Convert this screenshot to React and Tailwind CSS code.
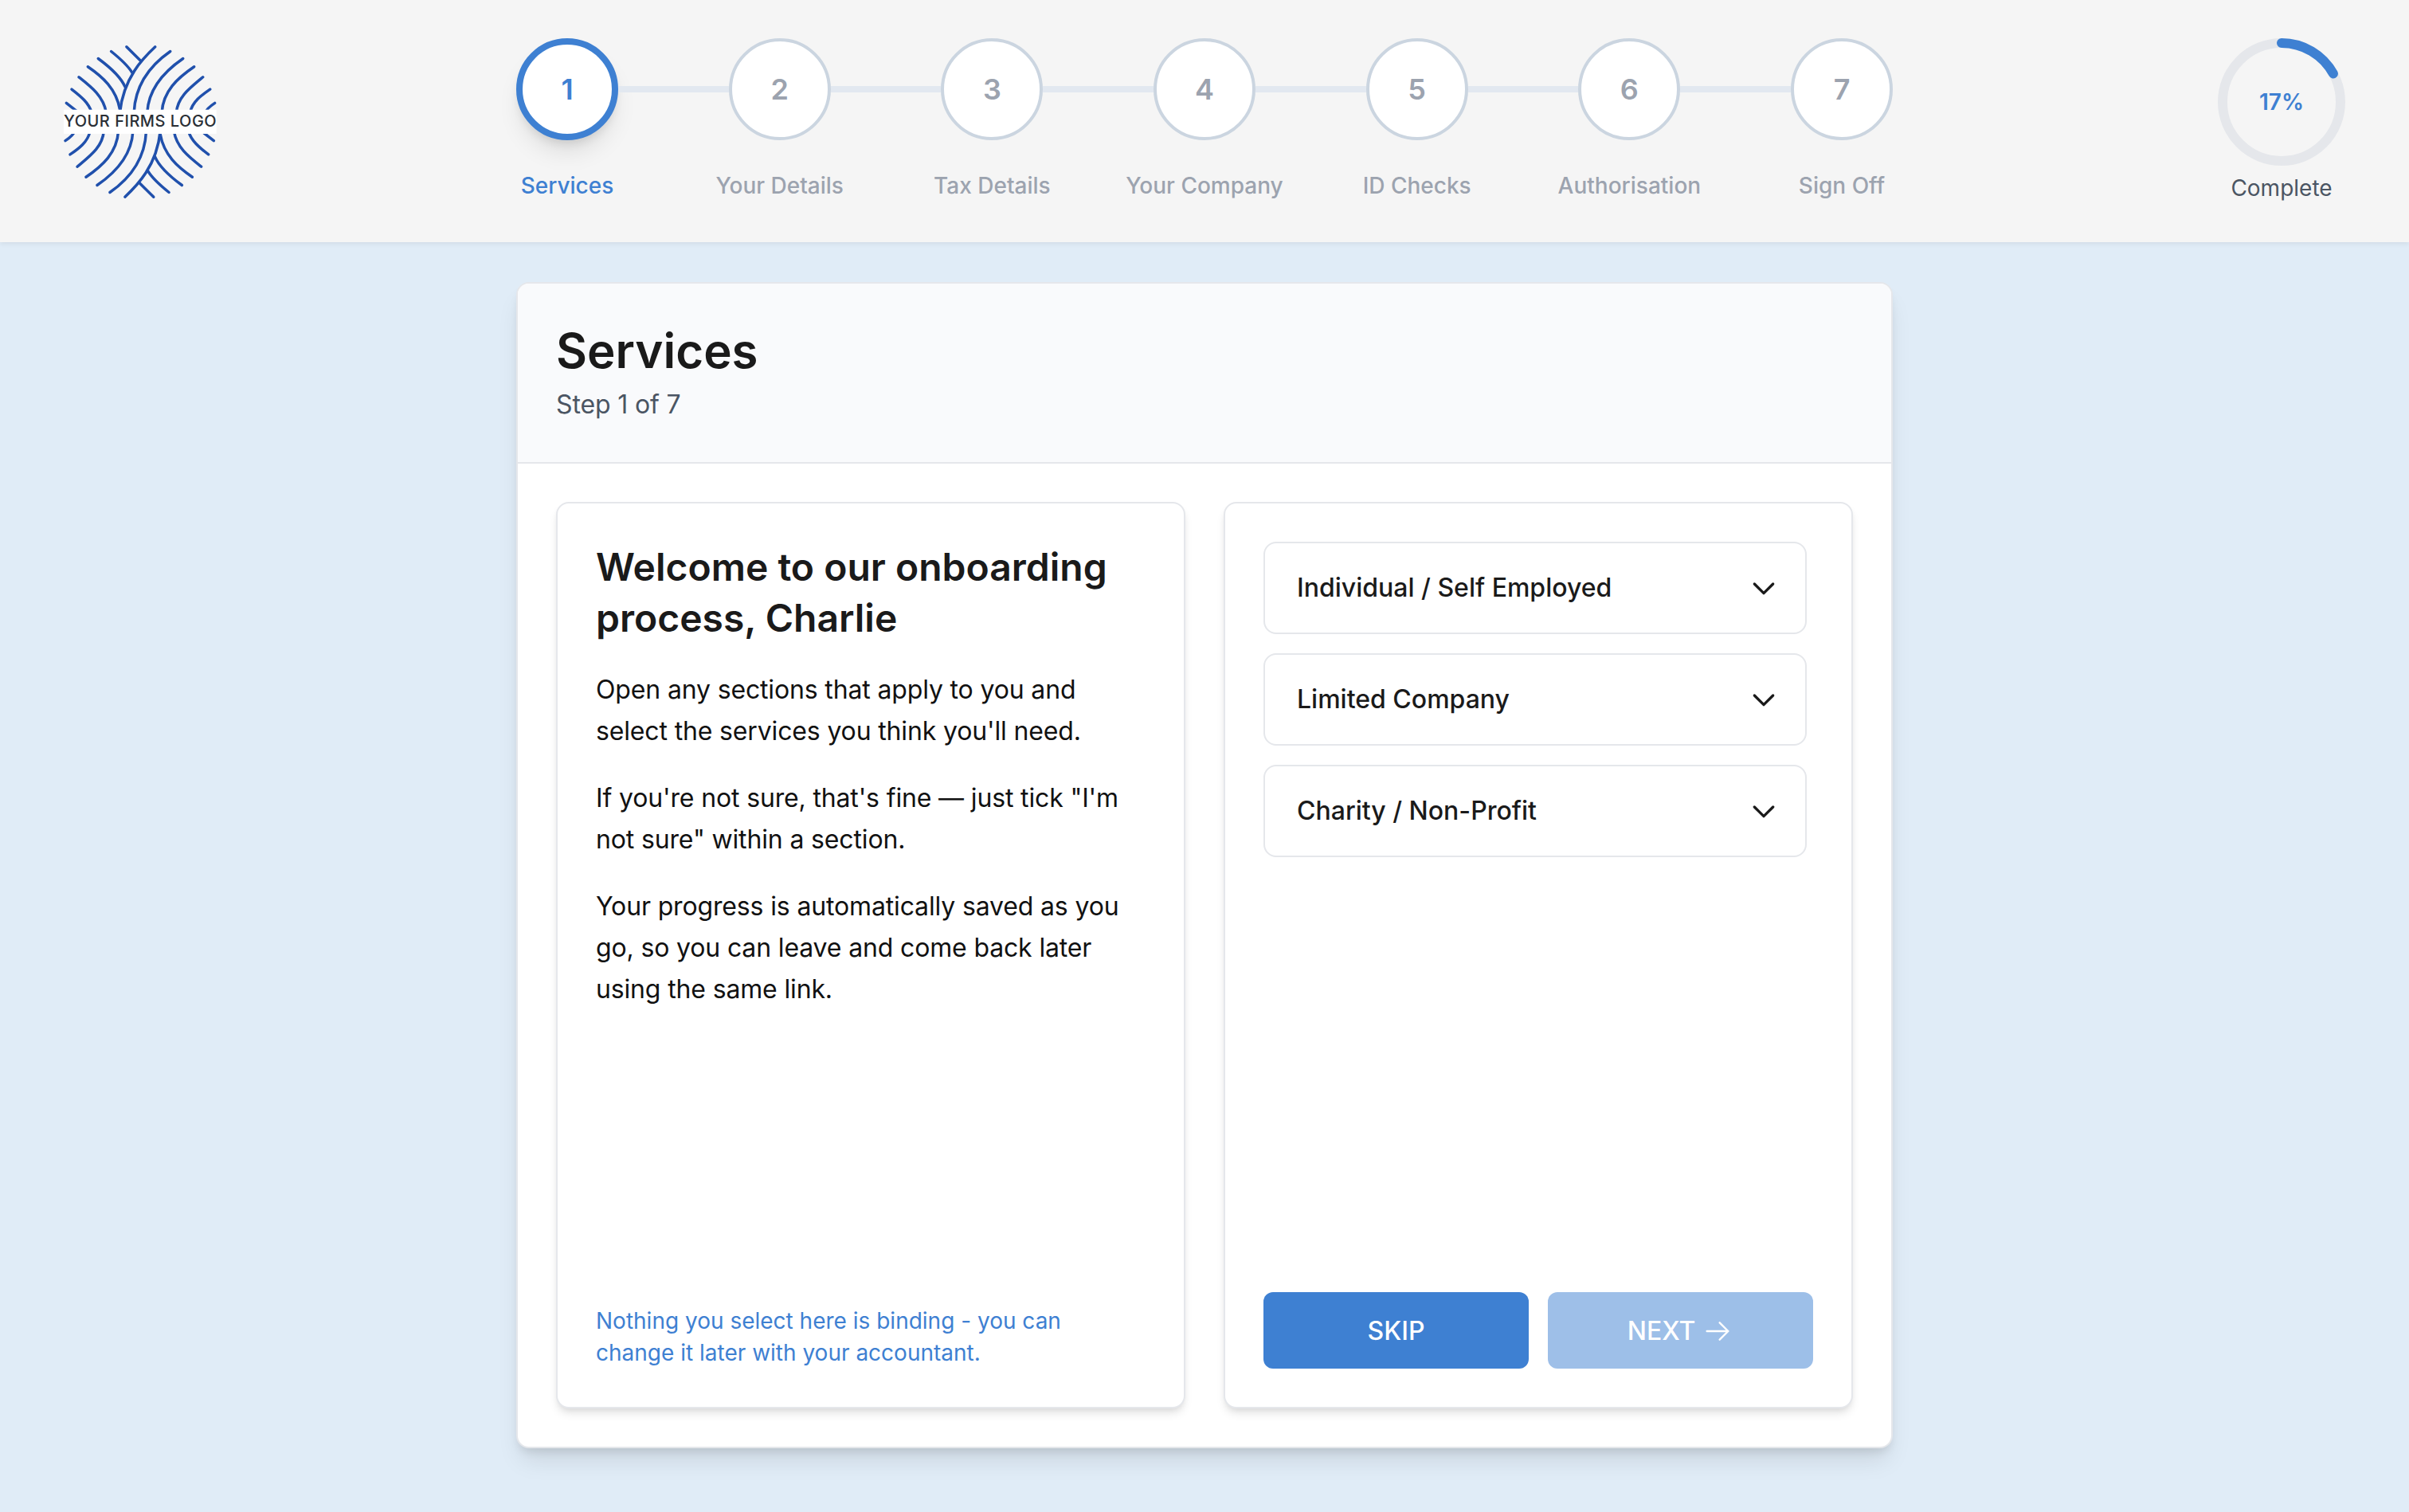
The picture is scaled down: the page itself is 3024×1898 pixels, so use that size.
const steps = ["Services", "Your Details", "Tax Details", "Your Company", "ID Checks", "Authorisation", "Sign Off"];
const sections = ["Individual / Self Employed", "Limited Company", "Charity / Non-Profit"];

function Logo() {
  const lines = [
    "M465 83 C420 125 345 200 332 330",
    "M357 83 L410 135",
    "M299 100 C330 125 360 150 378 180",
    "M250 127 C295 160 335 195 352 235",
    "M211 158 C265 195 318 240 332 320",
    "M177 197 C225 235 270 270 280 330",
    "M150 243 C185 270 215 295 225 330",
    "M130 295 L175 330",
    "M522 100 C450 150 390 220 385 330",
    "M570 127 C500 175 440 240 435 330",
    "M612 158 C550 200 495 250 490 330",
    "M645 197 C600 235 550 270 545 330",
    "M672 243 C640 265 605 290 597 330",
    "M690 295 C675 305 660 315 655 330",
  ];
  return (
    <svg width="193" height="195" viewBox="120 75 580 585" className="mt-2">
      <g fill="none" stroke="#2050ac" strokeWidth="10.5" strokeLinecap="round">
        {lines.map((d) => <path key={d} d={d} />)}
        <g transform="rotate(180 408 366)">
          {lines.map((d) => <path key={d} d={d} />)}
        </g>
      </g>
      <rect x="120" y="320" width="576" height="91" fill="#ffffff" />
      <text x="408" y="385" textAnchor="middle" fontSize="60" fontWeight="500" fill="#2a2f36" textLength="576" lengthAdjust="spacing" fontFamily="Inter, sans-serif">YOUR FIRMS LOGO</text>
    </svg>
  );
}

function Step({ num, label, active }) {
  return (
    <div className="flex w-[128px] shrink-0 flex-col items-center">
      <div
        className={`flex h-[128px] w-[128px] items-center justify-center rounded-full bg-white text-[36px] font-semibold ${
          active
            ? "border-[8px] border-[#3e80d2] text-[#3e80d2] shadow-[0_20px_30px_-6px_rgba(0,0,0,0.1),0_8px_12px_-4px_rgba(0,0,0,0.1)]"
            : "border-[4px] border-[#cbd5e0] text-[#9ca3af]"
        }`}
      >
        {num}
      </div>
      <div className={`mt-[37px] whitespace-nowrap text-[28px] leading-[40px] font-medium ${active ? "text-[#3e80d2]" : "text-[#9ca3af]"}`}>
        {label}
      </div>
    </div>
  );
}

function ProgressRing() {
  return (
    <div className="flex w-[160px] flex-col items-center justify-self-end">
      <div className="relative h-[160px] w-[160px]">
        <svg width="160" height="160" viewBox="0 0 160 160" className="-rotate-90">
          <circle cx="80" cy="80" r="74" fill="none" stroke="#e5e7eb" strokeWidth="12" />
          <circle cx="80" cy="80" r="74" fill="none" stroke="#3e80d2" strokeWidth="12" strokeLinecap="round" strokeDasharray="79 465" />
        </svg>
        <div className="absolute inset-0 flex items-center justify-center text-[28px] font-semibold text-[#3e80d2]">17%</div>
      </div>
      <div className="mt-[8px] whitespace-nowrap text-[28px] leading-[40px] text-[#4b5563]">Complete</div>
    </div>
  );
}

function Section({ title }) {
  return (
    <div className="flex h-[116px] items-center justify-between rounded-[16px] border-2 border-[#e5e7eb] bg-white pl-10 pr-8">
      <span className="text-[32px] font-medium text-[#1a1a1a]">{title}</span>
      <svg width="40" height="40" viewBox="0 0 24 24" fill="none" stroke="#1a1a1a" strokeWidth="2" strokeLinecap="round" strokeLinejoin="round">
        <path d="M19 9l-7 7-7-7" />
      </svg>
    </div>
  );
}

export default function App() {
  return (
    <div className="flex min-h-[1898px] flex-col bg-[#e0ecf7] font-[Inter,sans-serif]">
      {/* Top bar */}
      <header className="grid h-[304px] grid-cols-[1fr_1728px_1fr] items-start bg-[#f5f5f5] px-20 pt-12 shadow-[0_2px_6px_rgba(0,0,0,0.07)]">
        <Logo />
        <div className="flex items-start">
          {steps.map((label, i) => (
            <div key={label} className={`flex items-start ${i < 6 ? "flex-1" : ""}`}>
              <Step num={i + 1} label={label} active={i === 0} />
              {i < 6 && <div className="mt-[60px] h-2 flex-1 bg-[#e2e8f0]"></div>}
            </div>
          ))}
        </div>
        <ProgressRing />
      </header>

      {/* Main card */}
      <main className="mx-auto mt-[50px] flex h-[1464px] w-[1728px] flex-col overflow-hidden rounded-[16px] border-2 border-[#e5e7eb] bg-white shadow-[0_20px_30px_-6px_rgba(0,0,0,0.1),0_8px_12px_-4px_rgba(0,0,0,0.1)]">
        <div className="border-b-2 border-[#e5e7eb] bg-[#f9fafc] p-12">
          <h1 className="text-[60px] leading-[72px] font-[640] text-[#1a1a1a]">Services</h1>
          <p className="mt-2 text-[32px] leading-[48px] tracking-[-0.15px] text-[#4b5563]">Step 1 of 7</p>
        </div>

        <div className="grid flex-1 grid-cols-2 gap-12 p-12">
          <div className="flex flex-col rounded-[16px] border-2 border-[#e5e7eb] bg-white p-12 shadow-[0_8px_12px_-2px_rgba(0,0,0,0.1),0_4px_8px_-4px_rgba(0,0,0,0.1)]">
            <h2 className="text-[48px] leading-[64px] font-[640] text-[#1a1a1a]">
              Welcome to our onboarding process, Charlie
            </h2>
            <div className="mt-8 flex flex-col gap-8 text-[32px] leading-[52px] tracking-[-0.15px] text-[#111111]">
              <p>Open any sections that apply to you and select the services you think you'll need.</p>
              <p>If you're not sure, that's fine — just tick "I'm not sure" within a section.</p>
              <p>Your progress is automatically saved as you go, so you can leave and come back later using the same link.</p>
            </div>
            <p className="mt-auto text-[28px] leading-[40px] text-[#3e80d2]">
              Nothing you select here is binding - you can change it later with your accountant.
            </p>
          </div>

          <div className="flex flex-col rounded-[16px] border-2 border-[#e5e7eb] bg-white p-12 shadow-[0_8px_12px_-2px_rgba(0,0,0,0.1),0_4px_8px_-4px_rgba(0,0,0,0.1)]">
            <div className="flex flex-col gap-6 pr-2">
              {sections.map((s) => <Section key={s} title={s} />)}
            </div>
            <div className="mt-auto grid grid-cols-2 gap-6">
              <button className="flex h-[96px] items-center justify-center rounded-[12px] bg-[#3e80d2] pt-[2px] text-[32px] font-medium text-white">
                SKIP
              </button>
              <button className="flex h-[96px] items-center justify-center gap-3 rounded-[12px] bg-[#3e80d2] pt-[2px] pr-[4px] text-[32px] font-medium text-white opacity-50">
                NEXT
                <svg width="32" height="32" viewBox="0 0 24 24" fill="none" stroke="currentColor" strokeWidth="1.8" strokeLinecap="round" strokeLinejoin="round">
                  <path d="M2 12h20m-8-8 8 8-8 8" />
                </svg>
              </button>
            </div>
          </div>
        </div>
      </main>
    </div>
  );
}
